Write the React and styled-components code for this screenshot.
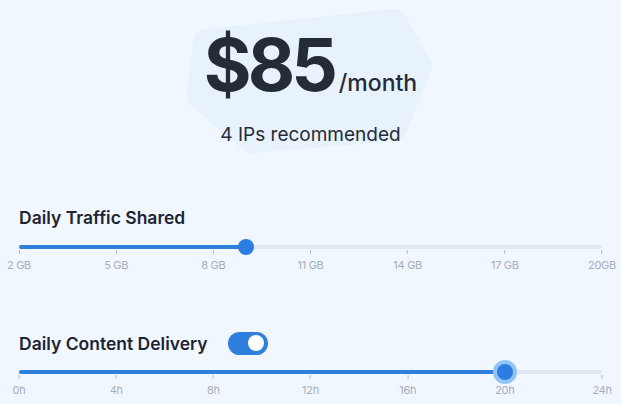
import React from "react";
import styled, { createGlobalStyle } from "styled-components";

const GlobalStyle = createGlobalStyle`
  html, body {
    margin: 0;
    padding: 0;
    background: #f0f7fe;
  }
  body {
    font-family: Inter, "Noto Sans", sans-serif;
    color: #222837;
  }
`;

const gbMarks = ["2 GB", "5 GB", "8 GB", "11 GB", "14 GB", "17 GB", "20GB"];
const hourMarks = ["0h", "4h", "8h", "12h", "16h", "20h", "24h"];

function Slider({ value, marks, halo, gap }) {
  return (
    <SliderWrap $gap={gap}>
      <Track>
        <Fill style={{ width: `${value * 100}%` }} />
        <Thumb style={{ left: `${value * 100}%` }} $halo={halo} />
      </Track>
      <Marks>
        {marks.map((m, i) => (
          <Mark key={m} style={{ left: `${(i / (marks.length - 1)) * 100}%` }}>
            <Tick />
            <MarkLabel>{m}</MarkLabel>
          </Mark>
        ))}
      </Marks>
    </SliderWrap>
  );
}

function App() {
  return (
    <Page>
      <GlobalStyle />
      <Hero>
        <Blob viewBox="0 0 260 160" aria-hidden="true">
          <polygon
            points="24,42 212,22 237,66 212,128 70,140 18,96"
            fill="#e8f2fd"
            stroke="#e8f2fd"
            strokeWidth="26"
            strokeLinejoin="round"
          />
        </Blob>
        <PriceRow>
          <Price>$85</Price>
          <Per>/month</Per>
        </PriceRow>
        <Recommend>4 IPs recommended</Recommend>
      </Hero>

      <Section $top="59px">
        <TitleRow>
          <Title>Daily Traffic Shared</Title>
        </TitleRow>
        <Slider value={7 / 18} marks={gbMarks} gap="16px" />
      </Section>

      <Section $top="56px">
        <TitleRow>
          <Title>Daily Content Delivery</Title>
          <Toggle>
            <Knob />
          </Toggle>
        </TitleRow>
        <Slider value={20 / 24} marks={hourMarks} halo gap="15px" />
      </Section>
    </Page>
  );
}

const Page = styled.div`
  width: 621px;
  height: 404px;
  overflow: hidden;
  display: flex;
  flex-direction: column;
`;

const Hero = styled.div`
  position: relative;
  display: flex;
  flex-direction: column;
  align-items: center;
  padding-top: 28px;
`;

const Blob = styled.svg`
  position: absolute;
  left: 182px;
  top: 0;
  width: 260px;
  height: 160px;
  z-index: 0;
`;

const PriceRow = styled.div`
  position: relative;
  display: flex;
  align-items: baseline;
`;

const Price = styled.span`
  font-size: 73px;
  font-weight: 700;
  line-height: 1;
  letter-spacing: -4px;
  color: #252b37;
`;

const Per = styled.span`
  font-size: 23px;
  font-weight: 500;
  color: #252b37;
  margin-left: 5px;
`;

const Recommend = styled.div`
  position: relative;
  margin-top: 22px;
  font-size: 19px;
  font-weight: 400;
  color: #252b37;
`;

const Section = styled.div`
  padding: 0 19px;
  margin-top: ${(p) => p.$top};
`;

const TitleRow = styled.div`
  display: flex;
  align-items: center;
  gap: 20px;
  height: 24px;
`;

const Title = styled.div`
  font-size: 17.5px;
  font-weight: 600;
  color: #1f2433;
`;

const Toggle = styled.div`
  width: 40px;
  height: 23px;
  border-radius: 12px;
  background: #2f7fdc;
  display: flex;
  align-items: center;
  justify-content: flex-end;
  padding: 0 4px;
  box-sizing: border-box;
`;

const Knob = styled.div`
  width: 16px;
  height: 16px;
  border-radius: 50%;
  background: #ffffff;
`;

const SliderWrap = styled.div`
  margin-top: ${(p) => p.$gap};
`;

const Track = styled.div`
  position: relative;
  height: 4px;
  border-radius: 2px;
  background: #e2e8f0;
`;

const Fill = styled.div`
  height: 100%;
  border-radius: 2px;
  background: #2f7fdc;
`;

const Thumb = styled.div`
  position: absolute;
  z-index: 2;
  top: 2px;
  width: 16px;
  height: 16px;
  border-radius: 50%;
  background: #2b7de1;
  transform: translate(-50%, -50%);
  box-shadow: ${(p) => (p.$halo ? "0 0 0 4px #91c3f5" : "none")};
`;

const Marks = styled.div`
  position: relative;
  height: 26px;
`;

const Mark = styled.div`
  position: absolute;
  top: 0;
  display: flex;
  flex-direction: column;
  align-items: center;
  transform: translateX(-50%);
`;

const Tick = styled.div`
  width: 1px;
  height: 4px;
  margin-top: 1px;
  background: #b9bec8;
`;

const MarkLabel = styled.div`
  margin-top: 4px;
  font-size: 11px;
  color: #a8aeba;
  white-space: nowrap;
  letter-spacing: -0.3px;
`;

export default App;
